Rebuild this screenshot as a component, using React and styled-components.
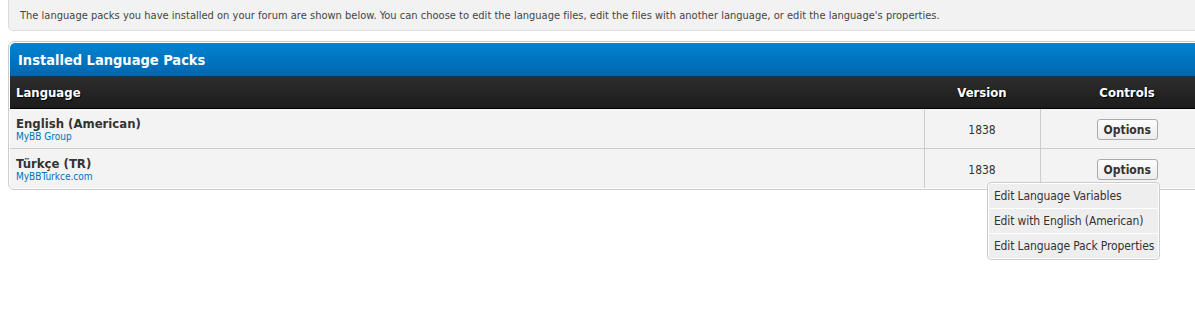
import React from 'react';
import styled, { createGlobalStyle } from 'styled-components';

const GlobalStyle = createGlobalStyle`
  html {
    overflow: hidden;
  }
  body {
    margin: 0;
    padding: 0;
    background: #fff;
    font-family: "DejaVu Sans Condensed", "DejaVu Sans", sans-serif;
    font-stretch: condensed;
    color: #333;
  }
`;

const Page = styled.div`
  width: 1208px;
  min-height: 320px;
  padding-left: 8px;
`;

const Notice = styled.div`
  margin-top: -12px;
  padding: 20px 11px 7px;
  background: #f2f2f2;
  border: 1px solid #ddd;
  border-radius: 5px;
  font-size: 11px;
  letter-spacing: 0.015px;
  color: #444;
  line-height: 14px;
`;

const BorderWrapper = styled.div`
  margin-top: 10px;
  border: 1px solid #ccc;
  border-radius: 6px;
  padding: 1px;
  background: #fff;
`;

const Title = styled.div`
  height: 32px;
  display: flex;
  align-items: center;
  padding: 1px 8px 0;
  background: linear-gradient(to bottom, #0284d3 0%, #0066ad 100%);
  border-bottom: 1px solid #0d3a5a;
  border-radius: 5px 5px 0 0;
  color: #fff;
  font-weight: bold;
  font-size: 14.5px;
`;

const Table = styled.table`
  width: 100%;
  border-collapse: collapse;
  font-size: 12px;
`;

const HeadCell = styled.th`
  height: 31px;
  padding: 0 6px;
  background: linear-gradient(to bottom, #2d2d2d 0%, #1c1c1c 100%);
  border-bottom: 1px solid #000;
  color: #fff;
  font-weight: bold;
  font-size: 13px;
  text-shadow: 1px 1px 0 #000;
  text-align: ${p => p.$align || 'left'};
  width: ${p => p.$width || 'auto'};
`;

const Row = styled.tr`
  background: #f3f3f3;
`;

const Cell = styled.td`
  height: 37px;
  padding: 2px 6px 0;
  border-bottom: ${p => (p.$last ? 'none' : '1px solid #ccc')};
  border-left: ${p => (p.$divider ? '1px solid #ccc' : 'none')};
  text-align: ${p => p.$align || 'left'};
  vertical-align: middle;
`;

const LangName = styled.div`
  font-weight: bold;
  font-size: 13px;
  color: #333;
  line-height: 15px;
`;

const Author = styled.a`
  display: block;
  font-size: 10px;
  color: #0072bc;
  text-decoration: none;
  line-height: 12px;
`;

const ControlWrap = styled.div`
  position: relative;
  display: inline-block;
`;

const OptionsButton = styled.button`
  font-family: inherit;
  font-stretch: condensed;
  font-size: 12px;
  font-weight: bold;
  color: #333;
  height: 21px;
  padding: 0 6px;
  border: 1px solid #aaa;
  border-radius: 3px;
  background: linear-gradient(to bottom, #fdfdfd 0%, #ececec 100%);
  cursor: pointer;
`;

const Menu = styled.div`
  position: absolute;
  top: 23px;
  right: -2px;
  width: 169px;
  padding: 1px;
  border: 1px solid #ccc;
  border-radius: 4px;
  background: #fff;
  text-align: left;
  z-index: 2;
`;

const MenuItem = styled.div`
  height: 24px;
  line-height: 24px;
  padding: 0 4px 0 5px;
  background: #eee;
  font-size: 12px;
  letter-spacing: -0.12px;
  color: #333;
  white-space: nowrap;
  border-top: ${p => (p.$first ? 'none' : '1px solid #fff')};
`;

const packs = [
  { name: 'English (American)', author: 'MyBB Group', version: '1838' },
  { name: 'Türkçe (TR)', author: 'MyBBTurkce.com', version: '1838', open: true },
];

const menuItems = ['Edit Language Variables', 'Edit with English (American)', 'Edit Language Pack Properties'];

export default function App() {
  return (
    <>
      <GlobalStyle />
      <Page>
        <Notice>
          The language packs you have installed on your forum are shown below. You can choose to edit the language files, edit the files with another language, or edit the language's properties.
        </Notice>
        <BorderWrapper>
          <Title>Installed Language Packs</Title>
          <Table>
            <thead>
              <tr>
                <HeadCell>Language</HeadCell>
                <HeadCell $align="center" $width="104px">Version</HeadCell>
                <HeadCell $align="center" $width="162px">Controls</HeadCell>
              </tr>
            </thead>
            <tbody>
              {packs.map((p, i) => (
                <Row key={p.name}>
                  <Cell $last={i === packs.length - 1}>
                    <LangName>{p.name}</LangName>
                    <Author href="#">{p.author}</Author>
                  </Cell>
                  <Cell $align="center" $divider $last={i === packs.length - 1}>{p.version}</Cell>
                  <Cell $align="center" $divider $last={i === packs.length - 1}>
                    <ControlWrap>
                      <OptionsButton>Options</OptionsButton>
                      {p.open && (
                        <Menu>
                          {menuItems.map((m, j) => (
                            <MenuItem key={m} $first={j === 0}>{m}</MenuItem>
                          ))}
                        </Menu>
                      )}
                    </ControlWrap>
                  </Cell>
                </Row>
              ))}
            </tbody>
          </Table>
        </BorderWrapper>
      </Page>
    </>
  );
}
